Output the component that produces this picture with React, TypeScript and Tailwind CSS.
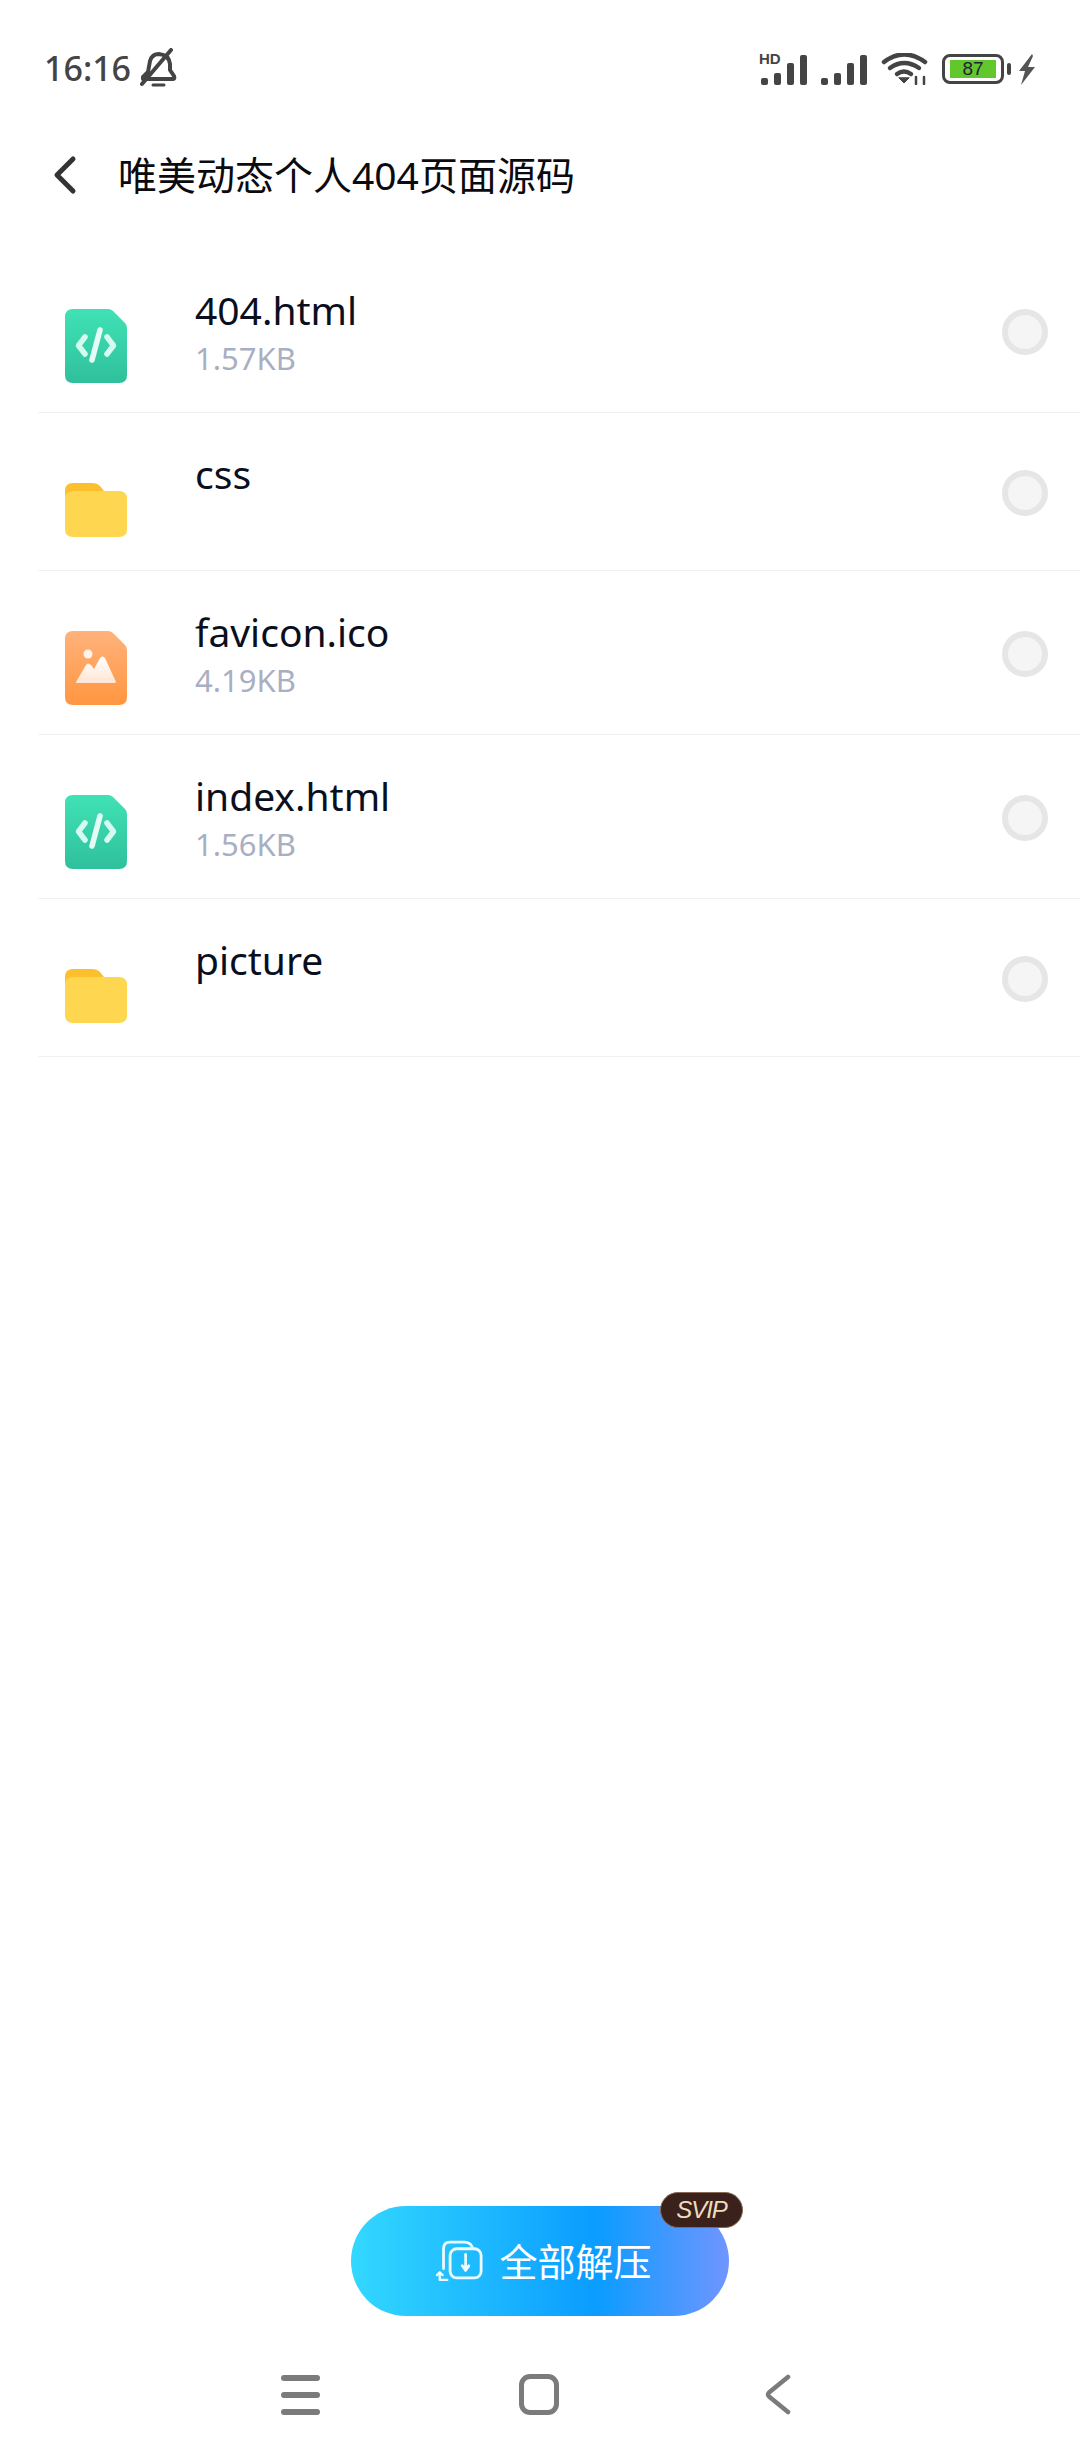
const FONT = "font-['Noto_Sans','Noto_Sans_CJK_SC',sans-serif]";

function CodeIcon() {
  return (
    <svg width="62" height="74" viewBox="0 0 62 74">
      <defs>
        <linearGradient id="gc" x1="0" y1="0" x2="0" y2="1">
          <stop offset="0" stopColor="#40e2b5" />
          <stop offset="1" stopColor="#2fc09c" />
        </linearGradient>
      </defs>
      <path d="M8 0H43Q46 0 48 2L60 14Q62 16 62 19V66Q62 74 54 74H8Q0 74 0 66V8Q0 0 8 0Z" fill="url(#gc)" />
      <path d="M20 28L13.5 36.5L20 45M42 28L48.5 36.5L42 45" fill="none" stroke="#d5faf0" strokeWidth="5.5" strokeLinecap="round" strokeLinejoin="round" />
      <path d="M35 21L27 51" fill="none" stroke="#e4fcf6" strokeWidth="5.5" strokeLinecap="round" />
    </svg>
  );
}

function FolderIcon() {
  return (
    <svg width="62" height="54" viewBox="0 0 62 54">
      <path d="M8 0H27Q32 0 35 3L39 8H10L0 16V8Q0 0 8 0Z" fill="#fcc02e" />
      <path d="M0 16Q0 8 8 8H54Q62 8 62 16V46Q62 54 54 54H8Q0 54 0 46Z" fill="#ffd64f" />
    </svg>
  );
}

function ImageIcon() {
  return (
    <svg width="62" height="74" viewBox="0 0 62 74">
      <defs>
        <linearGradient id="gi" x1="0" y1="0" x2="0" y2="1">
          <stop offset="0" stopColor="#ffb27c" />
          <stop offset="1" stopColor="#ff9640" />
        </linearGradient>
        <linearGradient id="gm" x1="0" y1="0" x2="0" y2="1">
          <stop offset="0" stopColor="#ffffff" />
          <stop offset="1" stopColor="#ffe6d4" />
        </linearGradient>
      </defs>
      <path d="M8 0H43Q46 0 48 2L60 14Q62 16 62 19V66Q62 74 54 74H8Q0 74 0 66V8Q0 0 8 0Z" fill="url(#gi)" />
      <circle cx="23" cy="23" r="4.5" fill="#fff3ea" />
      <path d="M11 51L21 34Q23 31 26 34L29 38L35 27Q37 24 40 27L51 51Q51 52 49 52H12Q10 52 11 51Z" fill="url(#gm)" />
    </svg>
  );
}

function Row({ name, size, kind, h }: { name: string; size?: string; kind: "code" | "folder" | "image"; h: string }) {
  return (
    <div className={`flex items-start border-b border-[#f0f0f0] ${h}`}>
      <div className={`ml-[27px] w-[62px] shrink-0 ${kind === "folder" ? "mt-[70px]" : "mt-[60px]"}`}>
        {kind === "code" && <CodeIcon />}
        {kind === "folder" && <FolderIcon />}
        {kind === "image" && <ImageIcon />}
      </div>
      <div className="ml-[68px] mt-[38px] flex flex-col">
        <span className="text-[39px] leading-[46px] text-[#0a0f1e]">{name}</span>
        {size && <span className="mt-[5px] text-[31px] leading-[40px] text-[#a8afc3]">{size}</span>}
      </div>
      <div className={`ml-auto mr-[32px] h-[46px] w-[46px] rounded-full border-[6px] border-[#e6e6e6] bg-[#f5f5f5] ${kind === "folder" ? "mt-[57px]" : "mt-[60px]"}`} />
    </div>
  );
}

function Signal({ hd }: { hd?: boolean }) {
  return (
    <div className="relative h-[32px] w-[48px]">
      {hd && (
        <span className="absolute left-[-1px] top-[0px] font-['Liberation_Sans',sans-serif] text-[15px] font-bold leading-[12px] text-[#444]">HD</span>
      )}
      <svg width="48" height="32" viewBox="0 0 48 32" fill="#444">
        <rect x="1" y="25" width="7" height="7" rx="2" />
        <rect x="14" y="20" width="7" height="12" rx="2" />
        <rect x="27" y="10" width="7" height="22" rx="2" />
        <rect x="40" y="2" width="7" height="30" rx="2" />
      </svg>
    </div>
  );
}

export default function App() {
  return (
    <div className={`flex h-[2460px] w-[1080px] flex-col overflow-hidden bg-white ${FONT}`}>
      {/* Status bar */}
      <div className="mt-[32px] flex h-[60px] items-end justify-between pb-[4px] pl-[44px] pr-[44px]">
        <div className="flex items-center gap-[9px]">
          <span className="text-[34px] font-medium leading-[40px] text-[#444]">16:16</span>
          <svg width="38" height="40" viewBox="0 0 38 40" fill="none" stroke="#444" strokeWidth="4" strokeLinecap="round" strokeLinejoin="round">
            <path d="M3 31H33Q35 31 34 28L30 22V16Q29 7 19 6Q12 6 10 13L8 24L3 29Z" />
            <path d="M2 36L31 2" />
            <path d="M13 37H24" strokeWidth="3" />
          </svg>
        </div>
        <div className="mb-[3px] flex items-end">
          <Signal hd />
          <div className="w-[12px]" />
          <Signal />
          <div className="w-[13px]" />
          <svg width="48" height="32" viewBox="0 0 48 32" fill="none" stroke="#444" strokeWidth="4.5" strokeLinecap="round">
            <path d="M3 9Q23 -6 44 9" />
            <path d="M9 15Q23 5 38 15" />
            <path d="M16 21Q23 16 30 21" />
            <path d="M18 25L23 30L28 25Z" fill="#444" strokeWidth="1" />
            <path d="M35 24V31M43 24V31" strokeWidth="2.5" />
          </svg>
          <div className="mb-[1px] ml-[13px] flex h-[30px] w-[62px] items-center rounded-[8px] border-[3px] border-[#444] px-[5px]">
            <div className="flex h-[18px] w-[46px] items-center justify-center bg-[#62c62d] font-['Liberation_Sans',sans-serif] text-[19px] leading-[18px] text-[#223]">87</div>
          </div>
          <div className="mb-[10px] ml-[3px] h-[12px] w-[4px] rounded-[2px] bg-[#444]" />
          <svg className="ml-[7px]" width="18" height="31" viewBox="0 0 18 31" fill="#555">
            <path d="M14 0L1 17H7L3 31L17 13H10L15 2Z" />
          </svg>
        </div>
      </div>

      {/* Header */}
      <div className="mt-[53px] flex h-[60px] items-center">
        <svg className="ml-[50px]" width="28" height="40" viewBox="0 0 28 40" fill="none" stroke="#333" strokeWidth="5" strokeLinecap="round" strokeLinejoin="round">
          <path d="M23 4L7 20L23 36" />
        </svg>
        <span className="ml-[40px] text-[39px] leading-[50px] text-[#0a0a0f]">唯美动态个人404页面源码</span>
      </div>

      {/* List */}
      <div className="ml-[38px] mt-[44px] flex flex-col">
        <Row name="404.html" size="1.57KB" kind="code" h="h-[164px]" />
        <Row name="css" kind="folder" h="h-[158px]" />
        <Row name="favicon.ico" size="4.19KB" kind="image" h="h-[164px]" />
        <Row name="index.html" size="1.56KB" kind="code" h="h-[164px]" />
        <Row name="picture" kind="folder" h="h-[158px]" />
      </div>

      <div className="flex-1" />

      {/* Extract button */}
      <div className="flex justify-center">
        <div className="relative flex h-[110px] w-[378px] items-center justify-center rounded-full bg-[linear-gradient(90deg,#33d8ff_0%,#0a9cff_65%,#7095ff_100%)]">
          <svg className="ml-[8px]" width="47" height="42" viewBox="0 0 50 44" fill="none" stroke="#eafaff" strokeWidth="3" strokeLinecap="round" strokeLinejoin="round">
            <path d="M8 30V9Q8 2 15 2H30Q37 2 39 8" />
            <rect x="15" y="9" width="33" height="31" rx="7" />
            <path d="M31.5 15V31M28 27L31.5 32L35 27" strokeDasharray="3 1.5" />
            <path d="M4 36V42H12M1 37L4 34L7 37" strokeWidth="2.5" />
          </svg>
          <span className="ml-[16px] text-[38px] leading-[50px] text-white">全部解压</span>
          <div className="absolute right-[-14px] top-[-14px] flex h-[36px] w-[83px] items-center justify-center rounded-full border border-[#8a6a55] bg-[#3a211c] font-['Liberation_Sans',sans-serif] text-[24px] italic leading-[24px] tracking-[-1px] text-[#f0dcba]">
            SVIP
          </div>
        </div>
      </div>

      {/* Navigation */}
      <div className="mb-[45px] mt-[58px] flex h-[41px] items-center pl-[281px]">
        <div className="flex w-[39px] flex-col gap-[11px]">
          <div className="h-[6px] rounded-full bg-[#7b7b7b]" />
          <div className="h-[6px] rounded-full bg-[#7b7b7b]" />
          <div className="h-[6px] rounded-full bg-[#7b7b7b]" />
        </div>
        <div className="ml-[199px] h-[41px] w-[40px] rounded-[11px] border-[5px] border-[#7b7b7b]" />
        <svg className="ml-[206px]" width="26" height="41" viewBox="0 0 26 41" fill="none" stroke="#7b7b7b" strokeWidth="4.5" strokeLinecap="round" strokeLinejoin="round">
          <path d="M23 3L4 18.5Q2 20.5 4 22.5L23 38" />
        </svg>
      </div>
    </div>
  );
}
